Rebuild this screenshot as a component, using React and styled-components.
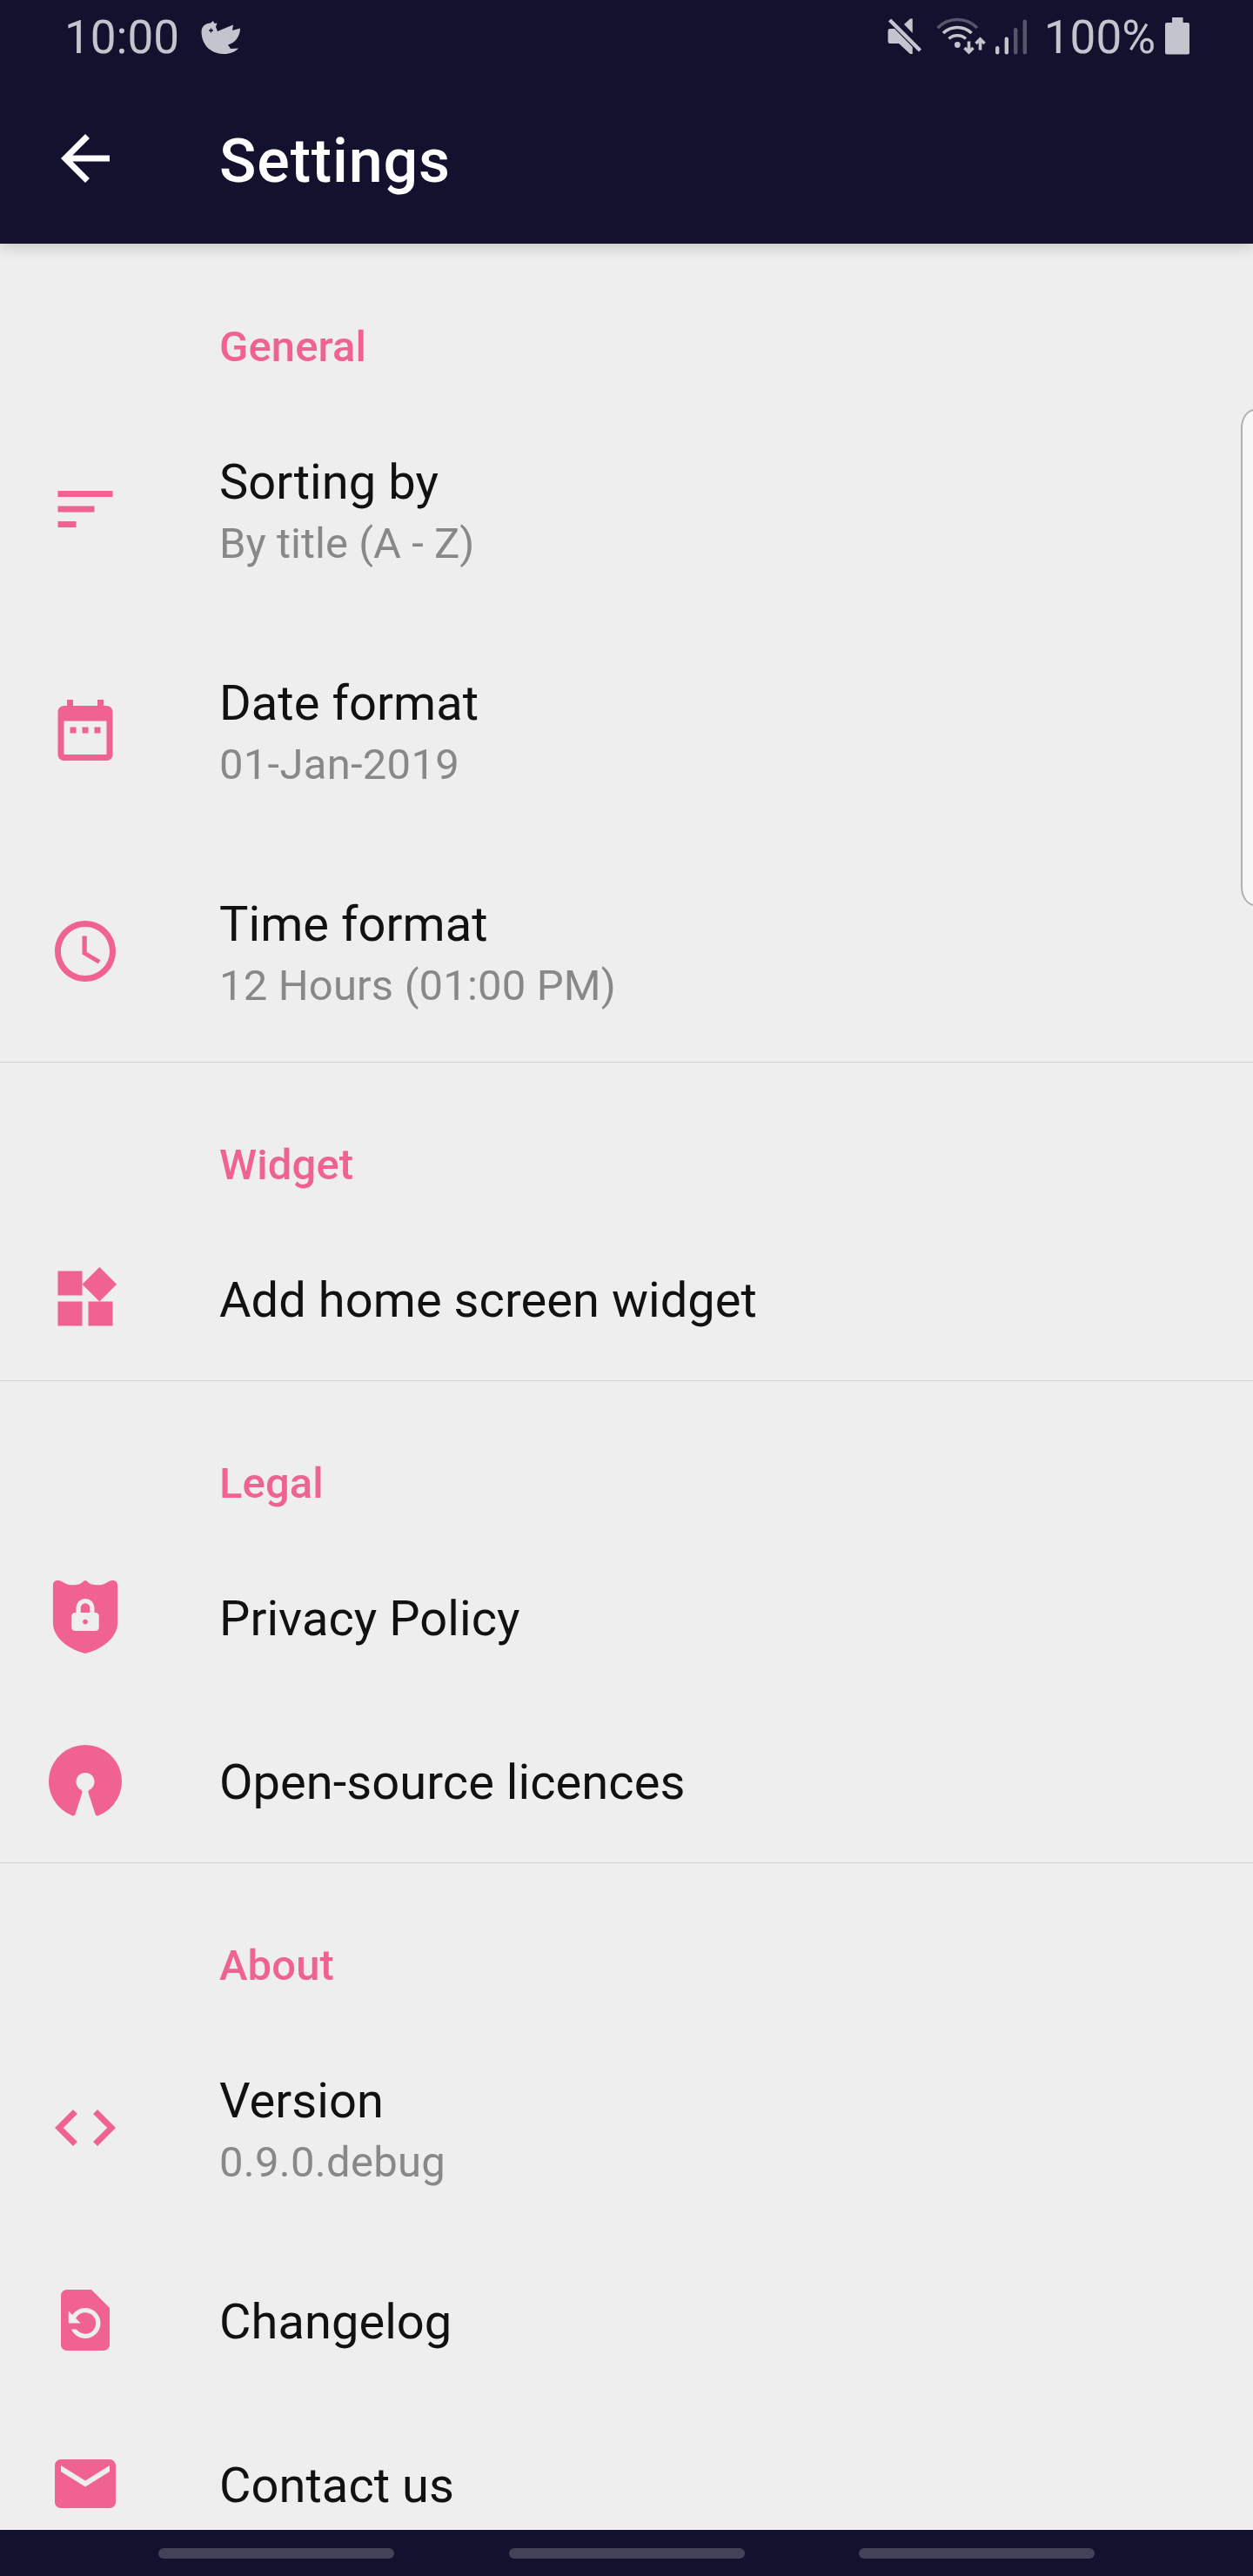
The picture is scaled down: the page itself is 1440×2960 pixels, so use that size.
import React from 'react';
import styled, { createGlobalStyle } from 'styled-components';

const Global = createGlobalStyle`
  *, *::before, *::after { box-sizing: border-box; }
  body { margin: 0; background: #eeeeee; font-family: Roboto, "Liberation Sans", sans-serif; }
`;

const Screen = styled.div`
  width: 1440px;
  height: 2960px;
  display: flex;
  flex-direction: column;
  overflow: hidden;
  background: #eeeeee;
  position: relative;
`;

const TopBar = styled.header`
  flex: none;
  height: 280px;
  background: #13122e;
  box-shadow: 0 4px 16px rgba(0, 0, 0, 0.17);
  z-index: 1;
`;

const StatusBar = styled.div`
  height: 84px;
  padding: 0 73px 0 74px;
  display: flex;
  justify-content: space-between;
  color: #c4c4ce;
`;

const StatusGroup = styled.div`
  display: flex;
  height: 84px;
`;

const StatusText = styled.span`
  font-size: 53px;
  line-height: 87px;
  white-space: nowrap;
`;

const StatusIcon = styled.svg`
  display: block;
  flex: none;
  height: 84px;
  width: ${(p) => p.$width}px;
  margin-left: ${(p) => p.$gap || 0}px;
  fill: currentColor;
`;

const Toolbar = styled.div`
  height: 196px;
  padding-left: 56px;
  display: flex;
  align-items: center;
  color: #ffffff;
`;

const Title = styled.h1`
  margin: 0 0 0 112px;
  font-size: 70px;
  line-height: 82px;
  font-weight: 500;
  letter-spacing: 0.0125em;
  padding-top: 5px;
`;

const Icon = styled.svg`
  display: block;
  flex: none;
  width: 84px;
  height: 84px;
  fill: currentColor;
`;

const List = styled.main`
  flex: 1;
  min-height: 0;
  overflow: hidden;
`;

const Section = styled.section`
  border-top: ${(p) => (p.$divided ? '1px solid #d2d2d2' : '0')};
  padding-top: ${(p) => (p.$divided ? 0 : 1)}px;
`;

const SectionTitle = styled.h2`
  margin: 0;
  height: 177px;
  padding: 89px 0 0 252px;
  font-size: 49px;
  line-height: 58px;
  font-weight: 500;
  letter-spacing: 0.1px;
  color: #f06292;
`;

const Row = styled.div`
  height: ${(p) => (p.$tall ? 254 : 188)}px;
  padding: 0 56px;
  display: flex;
  align-items: center;
  gap: 112px;
  color: #f06292;
`;

const RowText = styled.div`
  display: flex;
  flex-direction: column;
  padding-top: ${(p) => (p.$tall ? 5 : 4)}px;
`;

const Label = styled.span`
  font-size: 56px;
  line-height: 74px;
  letter-spacing: 0.06px;
  color: #111111;
`;

const Summary = styled.span`
  font-size: 49px;
  line-height: 67px;
  letter-spacing: ${(p) => p.$spacing || 0}px;
  color: #888888;
`;

const NavBar = styled.nav`
  flex: none;
  height: 53px;
  padding: 21px 182px 0;
  display: flex;
  justify-content: space-between;
  background: #13122e;
`;

const NavHandle = styled.span`
  width: 271px;
  height: 12px;
  border-radius: 6px;
  background: #434259;
`;

const EdgePanel = styled.aside`
  position: absolute;
  top: 470px;
  right: -20px;
  width: 34px;
  height: 571px;
  border: 2px solid #b0b0b0;
  border-radius: 16px / 22px;
  background: #f7f7f7;
`;

const icons = {
  sort: 'M3 18h6v-2H3v2zM3 6v2h18V6H3zm0 7h12v-2H3v2z',
  date: 'M9 11H7v2h2v-2zm4 0h-2v2h2v-2zm4 0h-2v2h2v-2zm2-7h-1V2h-2v2H8V2H6v2H5c-1.11 0-1.99.9-1.99 2L3 20c0 1.1.89 2 2 2h14c1.1 0 2-.9 2-2V6c0-1.1-.9-2-2-2zm0 16H5V9h14v11z',
  time: 'M11.99 2C6.47 2 2 6.48 2 12s4.47 10 9.99 10C17.52 22 22 17.52 22 12S17.52 2 11.99 2zM12 20c-4.42 0-8-3.58-8-8s3.58-8 8-8 8 3.58 8 8-3.58 8-8 8zm.5-13H11v6l5.25 3.15.75-1.23-4.5-2.67z',
  widgets: 'M13 13v8h8v-8h-8zM3 21h8v-8H3v8zM3 3v8h8V3H3zm13.66-1.31L11 7.34 16.66 13l5.66-5.66-5.66-5.65z',
  shield: 'M12 0 C12.5 0 13 .9 13.9 1.2 C15.3 1.65 17.3 1.65 18.4 1.1 C19.4 .6 20 0 21 0 C22 0 22.6 .6 22.6 1.7 V14 C22.6 19 17 22.8 12 24 C7 22.8 1.4 19 1.4 14 V1.7 C1.4 .6 2 0 3 0 C4 0 4.6 .6 5.6 1.1 C6.7 1.65 8.7 1.65 10.1 1.2 C11 .9 11.5 0 12 0 Z M9 10.6 H8.8 Q7.5 10.6 7.5 11.9 V15.3 Q7.5 16.6 8.8 16.6 H15.2 Q16.5 16.6 16.5 15.3 V11.9 Q16.5 10.6 15.2 10.6 H15 V9 A3 3 0 0 0 9 9 Z M10.5 10.6 V9 A1.5 1.5 0 0 1 13.5 9 V10.6 Z M12 12.8 A.8 .8 0 1 1 12 14.4 A.8 .8 0 1 1 12 12.8 Z',
  source: 'M12 .3 A12 12 0 0 0 7.7 23.5 Q8.4 23.8 8.7 23.1 L11 15.9 Q11.1 15.4 10.7 15.1 A3 3 0 1 1 13.3 15.1 Q12.9 15.4 13 15.9 L15.3 23.1 Q15.6 23.8 16.3 23.5 A12 12 0 0 0 12 .3 Z',
  code: 'M9.4 16.6L4.8 12l4.6-4.6L8 6l-6 6 6 6 1.4-1.4zm5.2 0l4.6-4.6-4.6-4.6L16 6l6 6-6 6-1.4-1.4z',
  restore: 'M14 2H6c-1.1 0-1.99.9-1.99 2L4 20c0 1.1.89 2 1.99 2H18c1.1 0 2-.9 2-2V8l-6-6zm-2 16c-2.05 0-3.81-1.24-4.58-3h1.71c.63.9 1.68 1.5 2.87 1.5 1.93 0 3.5-1.57 3.5-3.5S13.93 9.5 12 9.5c-1.35 0-2.52.78-3.1 1.9l1.6 1.6h-4V9l1.3 1.3C8.69 8.92 10.23 8 12 8c2.76 0 5 2.24 5 5s-2.24 5-5 5z',
  mail: 'M20 4H4c-1.1 0-1.99.9-1.99 2L2 18c0 1.1.9 2 2 2h16c1.1 0 2-.9 2-2V6c0-1.1-.9-2-2-2zm0 4l-8 5-8-5V6l8 5 8-5v2z',
  back: 'M20 11H7.83l5.59-5.59L12 4l-8 8 8 8 1.41-1.41L7.83 13H20v-2z',
};

const sections = [
  {
    title: 'General',
    items: [
      { icon: 'sort', label: 'Sorting by', summary: 'By title (A - Z)', spacing: 0.03 },
      { icon: 'date', label: 'Date format', summary: '01-Jan-2019', spacing: 0.27 },
      { icon: 'time', label: 'Time format', summary: '12 Hours (01:00 PM)', spacing: 0.16 },
    ],
  },
  { title: 'Widget', items: [{ icon: 'widgets', label: 'Add home screen widget' }] },
  {
    title: 'Legal',
    items: [
      { icon: 'shield', label: 'Privacy Policy' },
      { icon: 'source', label: 'Open-source licences' },
    ],
  },
  {
    title: 'About',
    items: [
      { icon: 'code', label: 'Version', summary: '0.9.0.debug', spacing: 0.27 },
      { icon: 'restore', label: 'Changelog' },
      { icon: 'mail', label: 'Contact us' },
    ],
  },
];

const Glyph = ({ name }) => (
  <Icon viewBox="0 0 24 24" aria-hidden="true">
    <path fillRule="evenodd" d={icons[name]} />
  </Icon>
);

const Bird = () => (
  <StatusIcon viewBox="230 0 46 84" $width={46} $gap={24}>
    <path d="M231.5 37 C231.5 30 236 27 242 26.5 L245 24 L246.5 27 L249.5 26.5 L248 31 L250 36 L268 28.5 L267 35 L276 32.5 C276 41 271 49 262 51.5 L265 56 L274 55.5 C270 60 263 62.5 256 62 C241 61 232 51 231.5 37 Z" />
    <path d="M240 35 h5 M242.5 32.5 v5" stroke="#13122e" strokeWidth="1.4" />
  </StatusIcon>
);

const Muted = () => (
  <StatusIcon viewBox="1019 0 42 84" $width={42}>
    <path d="M1048.7 21.5 V38 L1039 28 L1046 21.5 Z" />
    <path d="M1023 33 H1028 L1048.7 54 V62 H1046 L1033 50 H1023 Q1020.5 50 1020.5 47.5 V35.5 Q1020.5 33 1023 33 Z" />
    <path d="M1022.5 23 L1057.5 58" fill="none" stroke="currentColor" strokeWidth="4.4" />
  </StatusIcon>
);

const Wifi = () => (
  <StatusIcon viewBox="1076 0 58 84" $width={58} $gap={15}>
    <g fill="none" stroke="currentColor" strokeWidth="3.6">
      <path d="M1077.5 32 A32 32 0 0 1 1123 32" opacity=".38" />
      <path d="M1084 38 A23.5 23.5 0 0 1 1116.5 38" />
      <path d="M1090.5 44.5 A14.5 14.5 0 0 1 1110 44.5" />
      <path d="M1113.5 47.5 V60 M1108.5 55 L1113.5 60 L1118.5 55 M1126.5 57.5 V45 M1121.5 50 L1126.5 45 L1131.5 50" />
    </g>
    <circle cx="1100.3" cy="51.5" r="3.4" />
  </StatusIcon>
);

const Signal = () => (
  <StatusIcon viewBox="1143 0 40 84" $width={40} $gap={9}>
    <rect x="1144" y="53" width="4.4" height="9.5" rx="2.2" />
    <rect x="1154.6" y="42.5" width="4.4" height="20" rx="2.2" />
    <g opacity=".38">
      <rect x="1165" y="32" width="4.4" height="30.5" rx="2.2" />
      <rect x="1175.6" y="22.5" width="4.4" height="40" rx="2.2" />
    </g>
  </StatusIcon>
);

const Battery = () => (
  <StatusIcon viewBox="1339 0 28 84" $width={28} $gap={11}>
    <path d="M1347 20 H1359.5 V26 H1365 Q1367 26 1367 28 V60.5 Q1367 62.5 1365 62.5 H1341 Q1339 62.5 1339 60.5 V28 Q1339 26 1341 26 H1347 Z" />
  </StatusIcon>
);

const Spacer = styled.i`
  width: 17px;
`;

export default function App() {
  return (
    <Screen>
      <Global />
      <TopBar>
        <StatusBar>
          <StatusGroup>
            <StatusText>10:00</StatusText>
            <Bird />
          </StatusGroup>
          <StatusGroup>
            <Muted />
            <Wifi />
            <Signal />
            <Spacer />
            <StatusText>100%</StatusText>
            <Battery />
          </StatusGroup>
        </StatusBar>
        <Toolbar>
          <Glyph name="back" />
          <Title>Settings</Title>
        </Toolbar>
      </TopBar>
      <List>
        {sections.map((section, i) => (
          <Section key={section.title} $divided={i > 0}>
            <SectionTitle>{section.title}</SectionTitle>
            {section.items.map((item) => (
              <Row key={item.label} $tall={Boolean(item.summary)}>
                <Glyph name={item.icon} />
                <RowText $tall={Boolean(item.summary)}>
                  <Label>{item.label}</Label>
                  {item.summary && <Summary $spacing={item.spacing}>{item.summary}</Summary>}
                </RowText>
              </Row>
            ))}
          </Section>
        ))}
      </List>
      <NavBar>
        <NavHandle />
        <NavHandle />
        <NavHandle />
      </NavBar>
      <EdgePanel />
    </Screen>
  );
}
